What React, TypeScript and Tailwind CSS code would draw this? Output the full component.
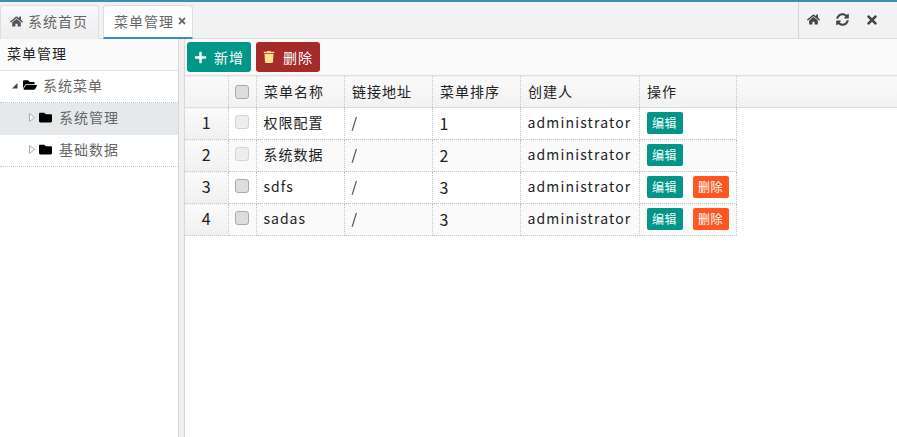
import React from "react";
import { FaHome, FaSyncAlt, FaTimes, FaPlus, FaTrash, FaFolder, FaFolderOpen } from "react-icons/fa";

const rows = [
  { n: 1, name: "权限配置", url: "/", order: 1, del: false, dis: true },
  { n: 2, name: "系统数据", url: "/", order: 2, del: false, dis: true },
  { n: 3, name: "sdfs", url: "/", order: 3, del: true, dis: false },
  { n: 4, name: "sadas", url: "/", order: 3, del: true, dis: false },
];

const Tri = ({ open }: { open?: boolean }) =>
  open ? (
    <svg width="7" height="7" viewBox="0 0 7 7" className="shrink-0"><path d="M6.5 1 L6.5 6.5 L1 6.5 Z" fill="#444" /></svg>
  ) : (
    <svg width="6" height="9" viewBox="0 0 6 9" className="shrink-0"><path d="M0.5 0.5 L5.5 4.5 L0.5 8.5 Z" fill="#fff" stroke="#aaa" /></svg>
  );

const Check = ({ dis }: { dis?: boolean }) => (
  <span className={`block w-[14px] h-[14px] rounded-[3px] border ${dis ? "border-[#d4d4d4] bg-[#eeeeee]" : "border-[#aaaaaa] bg-[#dddddd]"}`} />
);

const cols = ["w-[43px]", "w-[28px]", "w-[88px]", "w-[88px]", "w-[88px]", "w-[119px]", "w-[97px]"];
const th = "border-r border-dotted border-[#c4c4c4] h-[32px] px-[7px]";
const td = "border-r border-b border-dotted border-[#c4c4c4] h-[32px] px-[7px] pb-[2px]";

export default function App() {
  return (
    <div className="w-[897px] h-[437px] flex flex-col bg-white overflow-hidden text-[14px] text-[#333] tracking-[1px]" style={{ fontFamily: '"Noto Sans CJK SC", "Noto Sans", sans-serif' }}>
      <div className="h-[2px] bg-[#3c8dbc] shrink-0" />
      <div className="h-[37px] shrink-0 flex items-end bg-[#f2f2f2] border-b border-[#dddddd] relative">
        <div className="h-[34px] w-[99px] -mb-px flex items-center gap-[5px] pl-[9px] pb-[2px] rounded-t-[3px] border border-b-0 border-[#dddddd] bg-gradient-to-b from-[#f8f8f8] to-[#eeeeee] text-[#666]">
          <FaHome className="text-[13px] text-[#555]" />
          <span>系统首页</span>
        </div>
        <div className="ml-[4px] h-[34px] w-[90px] -mb-px flex items-center pl-[10px] gap-[3px] pb-[1px] rounded-t-[3px] border border-[#dddddd] border-b-2 border-b-[#3c8dbc] bg-white text-[#666]">
          <span>菜单管理</span>
          <FaTimes className="text-[10px] text-[#666]" />
        </div>
        <div className="ml-auto w-[99px] h-[36px] border-l border-[#d4d4d4] flex items-center gap-[16px] pl-[8px] pb-[1px] text-[#444]">
          <FaHome className="text-[13px]" />
          <FaSyncAlt className="text-[13px]" />
          <FaTimes className="text-[14px]" />
        </div>
      </div>
      <div className="flex flex-1 min-h-0">
        <div className="w-[178px] shrink-0 flex flex-col">
          <div className="h-[32px] flex items-center pl-[7px] pb-[2px] text-[#222] border-b border-[#e2e2e2] bg-[#fafafa]">菜单管理</div>
          <div className="h-[32px] flex items-center pl-[11px] pb-[3px] border-b border-dotted border-[#c4c4c4] text-[#666]">
            <Tri open />
            <FaFolderOpen className="ml-[5px] text-[14px] text-black" />
            <span className="ml-[6px]">系统菜单</span>
          </div>
          <div className="h-[32px] flex items-center pl-[29px] pb-[4px] bg-[#e6e9ec] text-[#666]">
            <Tri />
            <FaFolder className="ml-[4px] text-[13px] text-black" />
            <span className="ml-[7px]">系统管理</span>
          </div>
          <div className="h-[32px] flex items-center pl-[29px] pb-[3px] border-b border-dotted border-[#c4c4c4] text-[#666]">
            <Tri />
            <FaFolder className="ml-[4px] text-[13px] text-black" />
            <span className="ml-[7px]">基础数据</span>
          </div>
        </div>
        <div className="w-[7px] shrink-0 bg-[#f0f0f0] border-x border-[#d8d8d8]" />
        <div className="flex-1 min-w-0 flex flex-col">
          <div className="h-[36px] shrink-0 flex items-start gap-[5px] pl-[2px] pt-[3px] bg-[#fafafa]">
            <div className="w-[64px] h-[30px] rounded-[3px] bg-[#009688] text-white flex items-center pl-[7px] gap-[7px]">
              <FaPlus className="text-[13px]" />
              <span>新增</span>
            </div>
            <div className="w-[64px] h-[30px] rounded-[3px] bg-[#a52a2a] text-white flex items-center pl-[7px] gap-[8px]">
              <FaTrash className="text-[12px] text-[#ffe08a]" />
              <span>删除</span>
            </div>
          </div>
          <table className="table-fixed border-collapse w-full text-[#222]">
            <colgroup>
              {cols.map((c, i) => <col key={i} className={c} />)}
              <col />
            </colgroup>
            <thead>
              <tr className="bg-gradient-to-b from-[#fafafa] to-[#f2f2f2] border-y border-[#dddddd]">
                <th className={th} />
                <th className={`${th} !px-[6px]`}><Check /></th>
                {["菜单名称", "链接地址", "菜单排序", "创建人", "操作"].map((h) => (
                  <th key={h} className={`${th} font-normal text-left !pl-[7.5px] !pr-0`}>{h}</th>
                ))}
                <th />
              </tr>
            </thead>
            <tbody>
              {rows.map((r, i) => {
                const bg = i % 2 ? "bg-[#fafafa]" : "bg-white";
                return (
                  <tr key={r.n}>
                    <td className={`${td} text-center text-[16px] tracking-normal !pb-[4px] bg-gradient-to-b from-[#fafafa] to-[#f0f0f0] text-[#222]`}>{r.n}</td>
                    <td className={`${td} ${bg} !px-[6px] !pb-[4px]`}><Check dis={r.dis} /></td>
                    <td className={`${td} ${bg}`}>{r.name}</td>
                    <td className={`${td} ${bg}`}>{r.url}</td>
                    <td className={`${td} ${bg} text-[16px]`}>{r.order}</td>
                    <td className={`${td} ${bg} tracking-[1.15px]`}>administrator</td>
                    <td className={`${td} ${bg}`}>
                      <div className="flex gap-[10px]">
                        <span className="w-[36px] h-[22px] rounded-[2px] bg-[#009688] text-white text-[12px] tracking-[0.5px] flex items-center justify-center">编辑</span>
                        {r.del && <span className="w-[36px] h-[22px] rounded-[2px] bg-[#ff5722] text-white text-[12px] tracking-[0.5px] flex items-center justify-center">删除</span>}
                      </div>
                    </td>
                    <td />
                  </tr>
                );
              })}
            </tbody>
          </table>
        </div>
      </div>
    </div>
  );
}
